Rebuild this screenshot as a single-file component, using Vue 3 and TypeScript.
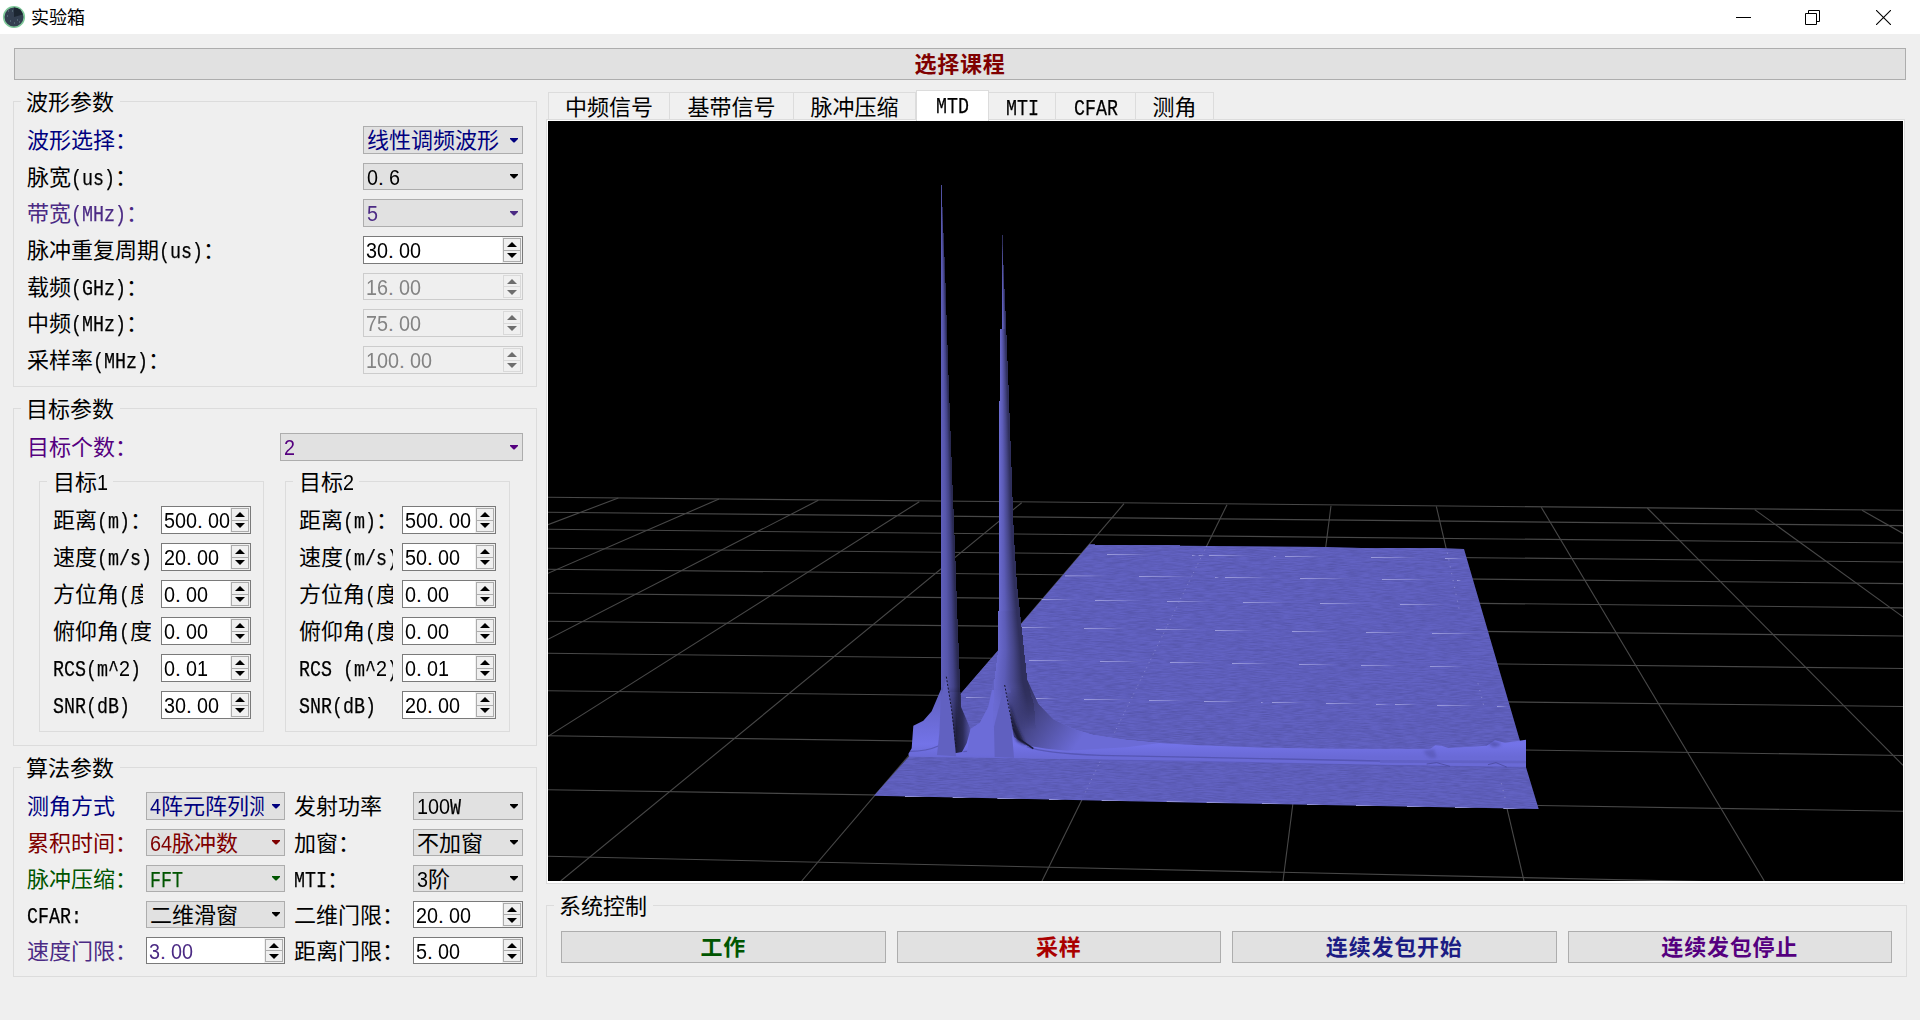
<script setup lang="ts">
import { h, ref } from 'vue'

type Kind = 'combo' | 'spin'
interface Field {
  label: string
  value: string
  kind: Kind
  color?: string
  disabled?: boolean
  short?: boolean
  clip?: boolean
}

/* Latin text sits on half-width cells, ideographs on full-width cells. */
const CellText = (props: { t: string }) => {
  const runs = props.t.match(/[0-9]+|\.|[\x20-\x2d\x2f\x3a-\x7e]+|[^\x00-\x7f]+/g) ?? []
  return h(
    'span',
    { class: 'cells' },
    runs.map((r) => {
      if (/^[0-9]/.test(r)) return h('span', { class: 'c-num', style: { '--n': r.length } }, r)
      if (r === '.') return h('span', { class: 'c-dot' }, r)
      if (/^[\x20-\x7e]/.test(r)) return h('span', { class: 'c-lat', style: { '--n': r.length } }, r)
      return h('span', { class: 'c-han' }, r)
    }),
  )
}
CellText.props = ['t']

const wave: Field[] = [
  { label: '波形选择：', value: '线性调频波形', kind: 'combo', color: 'navy' },
  { label: '脉宽(us)：', value: '0.6', kind: 'combo', short: true },
  { label: '带宽(MHz)：', value: '5', kind: 'combo', color: 'violet' },
  { label: '脉冲重复周期(us)：', value: '30.00', kind: 'spin' },
  { label: '载频(GHz)：', value: '16.00', kind: 'spin', disabled: true, short: true },
  { label: '中频(MHz)：', value: '75.00', kind: 'spin', disabled: true },
  { label: '采样率(MHz)：', value: '100.00', kind: 'spin', disabled: true },
]

const targets: { name: string; cls: string; fields: Field[] }[] = [
  {
    name: '目标1',
    cls: 'first',
    fields: [
      { label: '距离(m)：', value: '500.00', kind: 'spin' },
      { label: '速度(m/s)', value: '20.00', kind: 'spin' },
      { label: '方位角(度', value: '0.00', kind: 'spin', clip: true },
      { label: '俯仰角(度', value: '0.00', kind: 'spin' },
      { label: 'RCS(m^2)', value: '0.01', kind: 'spin' },
      { label: 'SNR(dB)', value: '30.00', kind: 'spin' },
    ],
  },
  {
    name: '目标2',
    cls: 'second',
    fields: [
      { label: '距离(m)：', value: '500.00', kind: 'spin' },
      { label: '速度(m/s)', value: '50.00', kind: 'spin' },
      { label: '方位角(度', value: '0.00', kind: 'spin' },
      { label: '俯仰角(度', value: '0.00', kind: 'spin' },
      { label: 'RCS (m^2)', value: '0.01', kind: 'spin' },
      { label: 'SNR(dB)', value: '20.00', kind: 'spin' },
    ],
  },
]

const algo: Field[] = [
  { label: '测角方式', value: '4阵元阵列测', kind: 'combo', color: 'navy' },
  { label: '发射功率', value: '100W', kind: 'combo' },
  { label: '累积时间：', value: '64脉冲数', kind: 'combo', color: 'maroon', short: true },
  { label: '加窗：', value: '不加窗', kind: 'combo', short: true },
  { label: '脉冲压缩：', value: 'FFT', kind: 'combo', color: 'green', short: true },
  { label: 'MTI：', value: '3阶', kind: 'combo', short: true },
  { label: 'CFAR:', value: '二维滑窗', kind: 'combo', short: true },
  { label: '二维门限：', value: '20.00', kind: 'spin', short: true },
  { label: '速度门限：', value: '3.00', kind: 'spin', color: 'violet', short: true },
  { label: '距离门限：', value: '5.00', kind: 'spin', short: true },
]

const tabs = [
  { name: '中频信号', w: 122 },
  { name: '基带信号', w: 124 },
  { name: '脉冲压缩', w: 122 },
  { name: 'MTD', w: 73 },
  { name: 'MTI', w: 67 },
  { name: 'CFAR', w: 80 },
  { name: '测角', w: 78 },
]
const active = ref('MTD')

const actions = [
  { name: '工作', color: 'green' },
  { name: '采样', color: 'red' },
  { name: '连续发包开始', color: 'indigo' },
  { name: '连续发包停止', color: 'purple' },
]

/* Ground grid: [x1, y1, x2, y2] in window coordinates. */
const gridLines: number[][] = [
  [548, 497.3, 1903, 510.3], [548, 512.3, 1903, 525.6], [548, 529.3, 1903, 543], [548, 548.3, 1903, 562],
  [548, 569.3, 1903, 583.6], [548, 593.3, 1903, 607.9], [548, 621.3, 1903, 636], [548, 653.3, 1903, 668.5],
  [548, 690.7, 1903, 706.5], [548, 735.7, 1903, 755.5], [548, 789.7, 1903, 811.3], [548, 856.3, 1903, 885.9],
  [618.3, 498, 548, 524.7], [719, 499, 548, 573.3], [818.3, 500.3, 548, 639.3], [919.3, 501.7, 548, 736.3],
  [1021.7, 502.7, 560.7, 881], [1124, 503.7, 801.7, 881], [1227, 504.7, 1042, 881], [1331, 505.7, 1283, 881],
  [1436.3, 506.3, 1524, 881], [1541.3, 507.3, 1764.3, 881], [1647.3, 508, 1903, 765.3],
  [1754.7, 509.6, 1903, 616.9], [1862, 510.3, 1903, 533.5],
]

/* Grid glints on the surface: [x, y, width] in mesh units (1/3 px from 860,480). */
const glints: number[][] = [
  [741, 223, 150], [996, 226, 14], [1016, 226, 22], [1047, 226, 140], [615, 287, 150], [837, 289, 180],
  [705, 361, 160], [921, 364, 150], [545, 358, 110], [485, 442, 120], [672, 445, 140], [888, 448, 140],
  [507, 541, 160], [720, 544, 140], [930, 547, 140], [318, 652, 90], [527, 655, 70], [672, 658, 150],
  [867, 661, 120], [1032, 664, 130], [1275, 229, 130], [1242, 229, 9], [1533, 232, 160], [1755, 235, 66],
  [1065, 292, 15], [1095, 292, 160], [1320, 295, 170], [1566, 298, 170], [1791, 301, 15], [1149, 367, 150],
  [1380, 370, 150], [1620, 373, 150], [1065, 451, 130], [1296, 454, 130], [1518, 457, 140], [1716, 460, 160],
  [1116, 550, 140], [1317, 553, 130], [1503, 556, 130], [1710, 559, 120], [1203, 667, 9], [1236, 667, 110],
  [1398, 670, 130], [1548, 673, 50], [1605, 673, 80], [1731, 676, 140], [1911, 679, 36],
]
const rims: number[][] = [
  [135, 948, 80], [278, 951, 60], [412, 954, 90], [567, 957, 50], [725, 960, 90], [920, 963, 80], [1040, 966, 90],
  [1206, 969, 80], [1341, 972, 60], [1488, 975, 80], [1641, 978, 70], [1785, 981, 70], [1930, 984, 60],
]

/* A peak is shaded row by row between its left and right outlines ([y, x] points). */
type Outline = [number, number][]
const at = (o: Outline, y: number): number => {
  for (let i = 1; i < o.length; i++) {
    const [y0, x0] = o[i - 1]
    const [y1, x1] = o[i]
    if (y <= y1) return x0 + ((x1 - x0) * (y - y0)) / (y1 - y0 || 1)
  }
  return o[o.length - 1][1]
}
const slices = (left: Outline, right: Outline, top: number, bottom: number) => {
  const out: { x: number; y: number; w: number }[] = []
  for (let y = top; y < bottom; y += 6) {
    const x = at(left, y)
    out.push({ x, y, w: Math.max(3, at(right, y) - x) })
  }
  return out
}
const peak1 = slices(
  [[-884, 243], [800, 243]],
  [[-884, 246], [-804, 248], [-636, 255], [-300, 266], [0, 277], [200, 285], [400, 292], [600, 300], [680, 303], [800, 308]],
  -884,
  780,
)
const peak2 = slices(
  [[-735, 425], [-454, 425], [-453, 419], [390, 417], [391, 414], [510, 414], [600, 403], [780, 396]],
  [[-735, 427], [-590, 433], [-450, 439], [-300, 445], [0, 456], [100, 459], [200, 464], [310, 471], [440, 485], [600, 502], [672, 522], [780, 530]],
  -735,
  760,
)
</script>

<template>
  <div class="window">
    <header class="titlebar">
      <svg class="logo" width="24" height="24" viewBox="0 0 24 24">
        <circle cx="12" cy="12" r="10.3" fill="#333f50" stroke="#7fc99a" stroke-width="1.6" />
        <path d="M12 12V2.6A9.4 9.4 0 0 1 20.8 9.5Z" fill="#1c2631" />
        <path d="M6 6h1M8 16h1M15 15h1M5 11h1M10 6h1M17 17h1M12 18h1" stroke="#6f8a91" />
      </svg>
      <span class="title">实验箱</span>
      <div class="sys">
        <svg width="15" height="15" viewBox="0 0 15 15"><path d="M0 7.5H15" stroke="#000" /></svg>
        <svg width="15" height="15" viewBox="0 0 15 15" fill="none" stroke="#000">
          <path d="M.5 3.5h11v11H.5zM3.5 3.5V.5h11v11h-3" />
        </svg>
        <svg width="15" height="15" viewBox="0 0 15 15"><path d="M0 0L15 15M15 0L0 15" stroke="#000" stroke-width="1.1" /></svg>
      </div>
    </header>

    <button class="btn course maroon">选择课程</button>

    <main class="body">
      <section class="left">
        <fieldset class="group wave">
          <legend><CellText t="波形参数" /></legend>
          <div v-for="f in wave" :key="f.label" class="row" :class="[f.color, { short: f.short }]">
            <label><CellText :t="f.label" /></label>
            <div class="field" :class="[f.kind, { off: f.disabled }]">
              <span class="val"><CellText :t="f.value" /></span>
              <svg v-if="f.kind === 'combo'" class="caret" width="8" height="5" viewBox="0 0 8 5"><path d="M0 0H8V1L4.5 4.5h-1L0 1z" fill="currentColor" /></svg>
              <span v-else class="steps">
                <i><svg width="10" height="5" viewBox="0 0 10 5"><path d="M5 0L10 5H0z" fill="currentColor" /></svg></i>
                <i><svg width="10" height="5" viewBox="0 0 10 5"><path d="M0 0H10L5 5z" fill="currentColor" /></svg></i>
              </span>
            </div>
          </div>
        </fieldset>

        <fieldset class="group target">
          <legend><CellText t="目标参数" /></legend>
          <div class="row count purple">
            <label><CellText t="目标个数：" /></label>
            <div class="field combo">
              <span class="val"><CellText t="2" /></span>
              <svg class="caret" width="8" height="5" viewBox="0 0 8 5"><path d="M0 0H8V1L4.5 4.5h-1L0 1z" fill="currentColor" /></svg>
            </div>
          </div>
          <div class="subs">
            <fieldset v-for="g in targets" :key="g.name" class="group sub" :class="g.cls">
              <legend><CellText :t="g.name" /></legend>
              <div v-for="f in g.fields" :key="f.label" class="row">
                <label :class="{ tight: f.clip }"><CellText :t="f.label" /></label>
                <div class="field spin">
                  <span class="val"><CellText :t="f.value" /></span>
                  <span class="steps">
                    <i><svg width="10" height="5" viewBox="0 0 10 5"><path d="M5 0L10 5H0z" fill="currentColor" /></svg></i>
                    <i><svg width="10" height="5" viewBox="0 0 10 5"><path d="M0 0H10L5 5z" fill="currentColor" /></svg></i>
                  </span>
                </div>
              </div>
            </fieldset>
          </div>
        </fieldset>

        <fieldset class="group algo">
          <legend><CellText t="算法参数" /></legend>
          <div class="pairs">
            <div v-for="f in algo" :key="f.label" class="row" :class="[f.color, { short: f.short }]">
              <label><CellText :t="f.label" /></label>
              <div class="field" :class="f.kind">
                <span class="val"><CellText :t="f.value" /></span>
                <svg v-if="f.kind === 'combo'" class="caret" width="8" height="5" viewBox="0 0 8 5"><path d="M0 0H8V1L4.5 4.5h-1L0 1z" fill="currentColor" /></svg>
                <span v-else class="steps">
                  <i><svg width="10" height="5" viewBox="0 0 10 5"><path d="M5 0L10 5H0z" fill="currentColor" /></svg></i>
                  <i><svg width="10" height="5" viewBox="0 0 10 5"><path d="M0 0H10L5 5z" fill="currentColor" /></svg></i>
                </span>
              </div>
            </div>
          </div>
        </fieldset>
      </section>

      <section class="right">
        <nav class="tabs">
          <div v-for="t in tabs" :key="t.name" class="tab" :class="{ on: t.name === active }" :style="{ width: t.w + 'px' }" @click="active = t.name">
            <CellText :t="t.name" />
          </div>
        </nav>
        <div class="pane">
          <svg class="plot" width="1355" height="760" viewBox="548 121 1355 760">
            <defs>
              <linearGradient id="glint"><stop offset="0" stop-color="#9c9cdc" /><stop offset=".5" stop-color="#7f7fcd" /><stop offset="1" stop-color="#6060bd" stop-opacity="0" /></linearGradient>
              <linearGradient id="sp1"><stop offset="0" stop-color="#5f5fbc" /><stop offset=".35" stop-color="#5656ab" /><stop offset=".65" stop-color="#434388" /><stop offset=".9" stop-color="#2a2a52" /><stop offset="1" stop-color="#29294f" /></linearGradient>
              <linearGradient id="sp2"><stop offset="0" stop-color="#6a6ad0" /><stop offset=".3" stop-color="#5c5cb7" /><stop offset=".6" stop-color="#464689" /><stop offset=".85" stop-color="#2f2f5c" /><stop offset="1" stop-color="#2f2f5c" /></linearGradient>
              <linearGradient id="foot1" gradientUnits="userSpaceOnUse" x1="262" y1="0" x2="340" y2="0">
                <stop offset="0" stop-color="#4a4a94" /><stop offset=".35" stop-color="#1f1f3d" /><stop offset=".6" stop-color="#2c2c58" /><stop offset="1" stop-color="#6666cc" />
              </linearGradient>
              <linearGradient id="skirt" gradientUnits="userSpaceOnUse" x1="470" y1="650" x2="660" y2="780">
                <stop offset="0" stop-color="#2f2f5c" /><stop offset=".4" stop-color="#49498f" /><stop offset="1" stop-color="#6b6bd6" />
              </linearGradient>
              <linearGradient id="base" gradientUnits="userSpaceOnUse" x1="0" y1="640" x2="0" y2="830">
                <stop offset="0" stop-color="#6161c0" /><stop offset=".8" stop-color="#7373e8" /><stop offset="1" stop-color="#6a6ad6" />
              </linearGradient>
              <linearGradient id="fadeDown" gradientUnits="userSpaceOnUse" x1="0" y1="620" x2="0" y2="750">
                <stop offset="0" stop-color="#fff" /><stop offset="1" stop-color="#000" />
              </linearGradient>
              <mask id="footFade" maskUnits="userSpaceOnUse" x="200" y="-900" width="400" height="1750">
                <rect x="200" y="-900" width="400" height="1750" fill="url(#fadeDown)" />
              </mask>
              <filter id="grain" x="0" y="0" width="1" height="1" color-interpolation-filters="sRGB">
                <feTurbulence type="fractalNoise" baseFrequency="0.03 0.7" numOctaves="2" seed="4" result="n" />
                <feColorMatrix in="n" type="matrix" values="0 0 0 0 .27  0 0 0 0 .27  0 0 0 0 .55  .75 0 0 0 -.24" result="m" />
                <feComposite in="m" in2="SourceGraphic" operator="in" />
              </filter>
              <filter id="soft" x="-20%" y="-20%" width="140%" height="140%"><feGaussianBlur stdDeviation="4" /></filter>
            </defs>
            <rect x="548" y="121" width="1355" height="760" fill="#000" />
            <line v-for="(l, i) in gridLines" :key="i" :x1="l[0]" :y1="l[1]" :x2="l[2]" :y2="l[3]" stroke="#484848" stroke-width="1.1" />

            <g transform="translate(860 480) scale(.333333)">
              <path d="M688 193H705V195H960V197L1400 201L1505 204H1738L1812 207L1980 783L1998 862L2036 987L1020 968L42 947L148 828L303 640L485 430Z" fill="#6262c2" />
              <path d="M688 193H705V195H960V197L1400 201L1505 204H1738L1812 207L1980 783L1998 862L2036 987L1020 968L42 947L148 828L303 640L485 430Z" fill="#6262c2" filter="url(#grain)" />
              <rect v-for="(g, i) in glints" :key="i" :x="g[0]" :y="g[1] - 1" :width="g[2]" height="3" fill="url(#glint)" />
              <rect v-for="(g, i) in rims" :key="'r' + i" :x="g[0]" :y="g[1]" :width="g[2]" height="3" fill="url(#glint)" />
              <path d="M1040 198L760 765M720 845L670 950" stroke="#8f8fd4" stroke-width="2.4" stroke-dasharray="3 9 3 14" fill="none" />
              <path d="M1762 218L1800 400M1854 610L1872 680M1924 910L1938 965" stroke="#8e8ed2" stroke-width="3" stroke-dasharray="3 18" fill="none" />

              <!-- clutter ridge -->
              <path d="M148 830L145 822L155 805L160 737L190 722L215 694L243 628L303 680L332 747L360 728L385 680L400 600L502 600L535 672L580 718L640 747L700 765L800 780L900 789L1000 795L1080 798L1220 803L1420 806L1710 807L1726 796L1745 797L1765 804L1880 797L1905 781L1935 788L1998 779V862L1020 845L600 837Z" fill="url(#base)" />
              <path d="M150 814Q200 814 235 798M310 815Q370 812 405 793M500 800Q550 820 720 826L1020 832L1560 843" fill="none" stroke="#4c4ca2" stroke-width="4" opacity=".65" />
              <path d="M1560 844L1998 846" fill="none" stroke="#5858b4" stroke-width="8" opacity=".5" />
              <path d="M600 838L1020 844L1560 856L1998 862" fill="none" stroke="#5555ae" stroke-width="3" opacity=".5" />
              <path d="M500 596L502 600L535 672L580 718L640 747L700 765L800 780L900 789L800 802L620 812L560 806L495 796L462 770L450 600Z" fill="url(#skirt)" />
              <path d="M1690 812Q1706 842 1730 832L1722 808Z" fill="#5050a6" opacity=".5" filter="url(#soft)" />
              <path d="M1885 788Q1900 812 1925 792L1900 784Z" fill="#4c4ca0" opacity=".7" filter="url(#soft)" />
              <path d="M1700 852L1730 848L1770 859M1884 854L1908 848L1940 861" stroke="#4a4a9c" stroke-width="3" fill="none" opacity=".8" />

              <!-- peak 1 -->
              <path d="M262 636L302 636L303 680L332 747L320 790L306 816L284 820Z" fill="url(#foot1)" />
              <g shape-rendering="crispEdges" mask="url(#footFade)">
                <rect v-for="s in peak1" :key="'a' + s.y" :x="s.x" :y="s.y" :width="s.w" height="6.2" fill="url(#sp1)" />
              </g>
              <path d="M243 650L259 590L275 690L288 829L231 825L238 760Z" fill="#6161c1" />
              <path d="M259 590L275 690L288 800" stroke="#15152b" stroke-width="3" stroke-dasharray="6 5" fill="none" />

              <!-- peak 2 -->
              <path d="M332 747L360 728L385 680L396 630L440 630V780L400 822H320Z" fill="#6c6cd8" />
              <path d="M440 638H518L535 672L560 700L505 797L462 770Z" fill="url(#skirt)" />
              <g shape-rendering="crispEdges" mask="url(#footFade)">
                <rect v-for="s in peak2" :key="'b' + s.y" :x="s.x" :y="s.y" :width="s.w" height="6.2" fill="url(#sp2)" />
              </g>
              <path d="M448 670L466 730L496 795L472 783L457 740Z" fill="#14142a" opacity=".85" filter="url(#soft)" />
              <path d="M402 740L434 615L450 690L462 833L404 831Z" fill="#6060c0" />
              <path d="M434 615L448 690L460 745" stroke="#15152b" stroke-width="3" stroke-dasharray="6 5" fill="none" />
              <path d="M460 745L475 775L520 806" stroke="#1b1b38" stroke-width="5" fill="none" />
            </g>
          </svg>
        </div>

        <fieldset class="group control">
          <legend><CellText t="系统控制" /></legend>
          <div class="actions">
            <button v-for="a in actions" :key="a.name" class="btn" :class="a.color">{{ a.name }}</button>
          </div>
        </fieldset>
      </section>
    </main>
  </div>
</template>

<style>
body { margin: 0; background: #efefef; }
.cells { display: inline-block; white-space: pre; height: 24px; line-height: 20px; vertical-align: top; }
.cells > span { line-height: 20px; }
.c-num { display: inline-block; width: calc(var(--n) * 11px); font-family: 'Liberation Sans', sans-serif; font-size: 22.5px; transform: scaleX(0.879); transform-origin: 0 0; }
.c-dot { font-family: 'Liberation Sans', sans-serif; font-size: 21px; letter-spacing: 5.16px; }
.c-lat { display: inline-block; width: calc(var(--n) * 11px); font-family: 'Liberation Mono', monospace; font-size: 22.5px; transform: scaleX(0.8148); transform-origin: 0 0; -webkit-text-stroke: 0.25px currentColor; }
.c-han { font-family: 'Noto Sans CJK SC', sans-serif; font-size: 22px; }
</style>

<style scoped>
.window { display: flex; flex-direction: column; width: 1920px; height: 1020px; overflow: hidden; background: #efefef; color: #000; font-family: 'Noto Sans CJK SC', sans-serif; font-size: 22px; }
.titlebar { display: flex; align-items: center; flex: none; height: 34px; background: #fff; padding-left: 2px; }
.logo { flex: none; }
.title { margin-left: 5px; padding-bottom: 2px; font-size: 18px; line-height: 32px; }
.sys { display: flex; gap: 55px; margin-left: auto; padding-right: 29px; }
.sys svg { display: block; }
.sys svg:nth-child(2) { margin-right: 1px; margin-left: -1px; }

.btn { display: flex; align-items: center; justify-content: center; box-sizing: border-box; height: 32px; margin: 0; padding: 0 0 3px; border: 1px solid #adadad; border-radius: 0; background: #e1e1e1; font: 700 22px/27px 'Noto Sans CJK SC', sans-serif; letter-spacing: 0.8px; }
.course { flex: none; margin: 14px 14px 10px; }

.body { display: flex; gap: 9px; padding-left: 13px; }
.left { width: 524px; display: flex; flex-direction: column; gap: 10px; }
.right { width: 1361px; }

.group { box-sizing: border-box; min-width: 0; margin: 0; padding: 13px 13px 0; border: 1px solid #dcdcdc; }
.group > legend { box-sizing: border-box; height: 23px; margin-left: -6px; padding: 0 6px 0 5px; line-height: 20px; }
.group > legend .cells { line-height: 18px; }
.wave { height: 297px; }
.target { height: 349px; }
.algo { height: 221px; }

.row { display: flex; align-items: center; height: 28px; margin-bottom: 9px; }
.row.short { height: 27px; }
.row > label { flex: 1; min-width: 0; height: 24px; overflow-x: clip; overflow-y: visible; white-space: nowrap; }
.field { display: flex; align-items: center; flex: none; box-sizing: border-box; width: 160px; height: 100%; border: 1px solid #adadad; background: #e1e1e1; }
.val { flex: 1; min-width: 0; height: 24px; overflow-x: clip; overflow-y: visible; white-space: nowrap; }
.combo { padding-left: 3px; }
.caret { flex: none; margin: 0 4px 0 8px; }
.spin { padding-left: 2px; border-color: #7a7a7a; background: #fff; }
.steps { display: flex; flex-direction: column; flex: none; align-self: stretch; box-sizing: border-box; width: 20px; padding: 1px; background: #f0f0f0; color: #000; }
.steps i { display: flex; flex: 1; align-items: center; justify-content: center; border: 1px solid #acacac; background: #f0f0f0; }
.steps i + i { border-top: 0; }
.steps svg { display: block; }
.off { border-color: #cccccc; background: #efefef; color: #838383; }
.off .steps { color: #6d6d6d; }
.off .steps i { border-color: #d9d9d9; }

.count { margin-bottom: 9px; }
.count .field { width: 243px; }
.subs { display: flex; gap: 21px; padding-left: 12px; }
.sub { width: 225px; height: 262px; }
.sub.first { padding-left: 13px; padding-right: 12px; }
.sub.second { padding-left: 13px; padding-right: 13px; }
.sub > legend { margin-left: -6px; padding-left: 6px; padding-right: 5px; }
.sub label { margin-right: 10px; }
.sub label.tight { margin-right: 18px; }
.first .field { width: 90px; }
.second .field { width: 94px; }
.second label { margin-right: 9px; }

.pairs { display: grid; grid-template-columns: 258px 238px; row-gap: 9px; }
.pairs .row { margin: 0; }
.pairs .row:nth-child(odd) .field { width: 139px; }
.pairs .row:nth-child(even) { padding-left: 9px; }
.pairs .row:nth-child(even) .field { width: 110px; }

.tabs { display: flex; align-items: flex-end; height: 29px; padding-left: 2px; }
.tab { display: flex; align-items: center; justify-content: center; box-sizing: border-box; height: 27px; padding-top: 2px; border: 1px solid #dcdcdc; border-width: 1px 1px 0 0; background: #f0f0f0; }
.tab:first-child { border-left-width: 1px; }
.tab.on { position: relative; z-index: 1; height: 31px; margin-bottom: -2px; padding: 0 0 3px; background: #fff; border-left-width: 1px; }
.pane { box-sizing: border-box; width: 1359px; height: 765px; padding: 1px 1px 2px; border: 1px solid #dcdcdc; background: #fff; }
.plot { display: block; }

.control { height: 83px; margin-top: 10px; padding: 14px 14px 0; }
.control > legend { margin-left: -7px; }
.actions { display: flex; gap: 11px; }
.actions .btn { flex: 1; }

.navy { color: #00007f; }
.violet { color: #4b2a84; }
.maroon { color: #7f0000; }
.green { color: #005500; }
.red { color: #aa0000; }
.indigo { color: #1c1c84; }
.purple { color: #55007f; }
.off { color: #838383; }
</style>
